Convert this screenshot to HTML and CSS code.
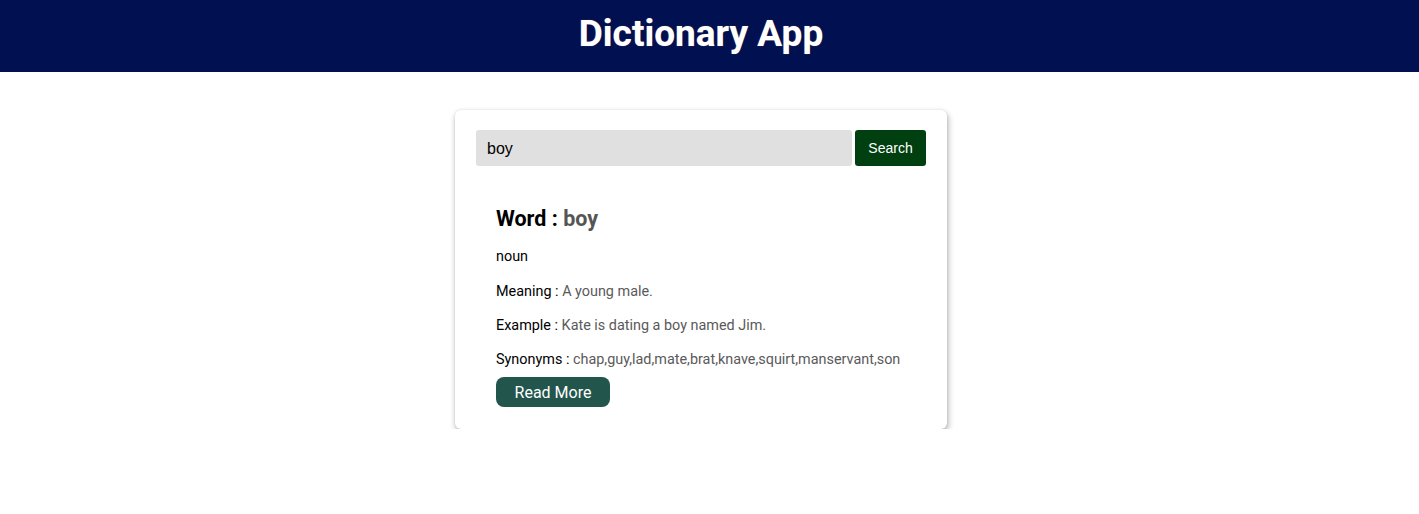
FILE: index.html
```html
<!DOCTYPE html>
<html>
<head>
<meta charset="utf-8">
<link rel="stylesheet" href="styles.css">
</head>
<body>
<header class="topbar">
  <h1 class="title">Dictionary App</h1>
</header>
<main class="page">
  <section class="card">
    <form class="search">
      <input class="search-input" type="text" value="boy">
      <button class="search-btn" type="button">Search</button>
    </form>
    <div class="result">
      <h2 class="word">Word : <span class="muted">boy</span></h2>
      <p class="line first">noun</p>
      <p class="line">Meaning : <span class="muted">A young male.</span></p>
      <p class="line">Example : <span class="muted">Kate is dating a boy named Jim.</span></p>
      <p class="line last">Synonyms : <span class="muted">chap,guy,lad,mate,brat,knave,squirt,manservant,son</span></p>
      <button class="more-btn" type="button">Read More</button>
    </div>
  </section>
</main>
</body>
</html>
```
FILE: styles.css
```css
* { box-sizing: border-box; }
body {
  margin: 0;
  font-family: Roboto, "Liberation Sans", sans-serif;
  background: #fff;
  color: #000;
}
.topbar {
  background: #001050;
  height: 72px;
  display: flex;
  align-items: center;
  justify-content: center;
  padding-right: 17px;
}
.title {
  margin: 0;
  color: #fff;
  font-size: 37px;
  font-weight: 700;
  line-height: 1;
  margin-top: -6px;
  text-shadow: 0 0 1px rgba(255,200,150,0.5);
}
.page {
  display: flex;
  justify-content: center;
  padding-top: 38px;
  padding-right: 17px;
}
.card {
  width: 492px;
  background: #fff;
  border-radius: 6px;
  padding: 20px 20px 22px 21px;
  box-shadow: 1px 3px 6px rgba(0,0,0,0.32), 0 0 2px rgba(0,0,0,0.1);
}
.search {
  display: flex;
  gap: 3px;
  margin: 0;
}
.search-input {
  width: 376px;
  height: 36px;
  border: none;
  border-radius: 3px;
  background: #e0e0e0;
  padding: 2px 11px 0;
  font-family: "Liberation Sans", Arial, sans-serif;
  font-size: 16px;
  color: #000;
  outline: none;
}
.search-btn {
  width: 71px;
  height: 36px;
  border: none;
  border-radius: 3px;
  background: #004010;
  color: #fff;
  font-family: "Liberation Sans", Arial, sans-serif;
  font-size: 14px;
  padding: 0;
}
.result {
  padding: 39px 20px 0 20px;
}
.word {
  margin: 0 0 15px;
  font-size: 21.5px;
  font-weight: 700;
  line-height: 28px;
  color: #000;
}
.line {
  margin: 0 0 17px;
  font-size: 14.4px;
  line-height: 17px;
}
.line.first { margin-bottom: 18px; }
.line.last { margin-bottom: 9px; }
.muted { color: #5a5a5a; }
.word .muted { color: #555; }
.more-btn {
  display: block;
  height: 30px;
  width: 114px;
  border: none;
  border-radius: 8px;
  background: #22554c;
  color: #fff;
  font-family: Roboto, sans-serif;
  font-size: 16px;
  padding: 0;
}
```
